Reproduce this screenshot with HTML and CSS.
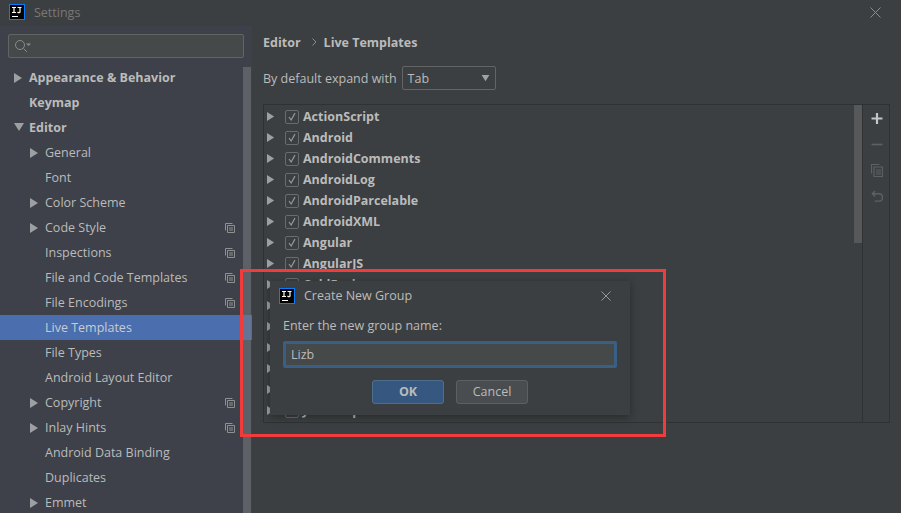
FILE: index.html
```html
<!DOCTYPE html>
<html>
	<head>
		<meta charset="utf-8" />
		<title>Settings</title>
		<link rel="stylesheet" href="styles.css">
	</head>
	<body>
		<svg class="defs" width="0" height="0">
			<symbol id="tri-r" viewBox="0 0 9 10"><path d="M0 0L8 5L0 10Z"/></symbol>
			<symbol id="tri-d" viewBox="0 0 10 9"><path d="M0 0H10L5 8Z"/></symbol>
			<symbol id="copy" viewBox="0 0 10 10"><path d="M.5 7.5V.5H7.5M2.500 2.500H9.500V9.500H2.500ZM4 5H8M4 7H8" fill="none" stroke="currentColor"/></symbol>
			<symbol id="check" viewBox="0 0 14 14"><path d="M3.500 7L6 10.500L10.500 2.500" fill="none" stroke="currentColor" stroke-width="1.300"/></symbol>
			<symbol id="logo" viewBox="0 0 16 16"><rect x=".5" y=".5" width="15" height="15" fill="#000" stroke="#087cfa"/><path d="M3 3.500H7M5 3.500V8.500M3 8.500H7M8.500 3.500H12.500M11 3.500V8C11 9 9.500 9 8.500 8M3 12.500H9" fill="none" stroke="#fff" stroke-width="1.200"/></symbol>
			<symbol id="close" viewBox="0 0 11 11"><path d="M.5 .5L10.500 10.500M10.500 .5L.5 10.500" fill="none" stroke="currentColor"/></symbol>
		</svg>

		<div class="window">
			<div class="titlebar">
				<svg class="logo"><use href="#logo"/></svg>
				<span class="title">Settings</span>
				<svg class="win-close"><use href="#close"/></svg>
			</div>
			<div class="content">
				<div class="sidebar">
					<div class="search">
						<svg class="search-icon" viewBox="0 0 17 14"><circle cx="6" cy="6" r="4.500" fill="none" stroke="currentColor"/><path d="M9.500 9.500L13 13" fill="none" stroke="currentColor"/><path d="M12 4.500H17L14.500 7Z" fill="currentColor"/></svg>
					</div>
					<div class="tree">
						<div class="node top"><svg class="tri"><use href="#tri-r"/></svg>Appearance &amp; Behavior</div>
						<div class="node top"><i class="gap"></i>Keymap</div>
						<div class="node top"><svg class="tri tri-open"><use href="#tri-d"/></svg>Editor</div>
						<div class="node sub"><svg class="tri"><use href="#tri-r"/></svg>General</div>
						<div class="node sub"><i class="gap"></i>Font</div>
						<div class="node sub"><svg class="tri"><use href="#tri-r"/></svg>Color Scheme</div>
						<div class="node sub"><svg class="tri"><use href="#tri-r"/></svg>Code Style<svg class="copy"><use href="#copy"/></svg></div>
						<div class="node sub"><i class="gap"></i>Inspections<svg class="copy"><use href="#copy"/></svg></div>
						<div class="node sub"><i class="gap"></i>File and Code Templates<svg class="copy"><use href="#copy"/></svg></div>
						<div class="node sub"><i class="gap"></i>File Encodings<svg class="copy"><use href="#copy"/></svg></div>
						<div class="node sub active"><i class="gap"></i>Live Templates</div>
						<div class="node sub"><i class="gap"></i>File Types</div>
						<div class="node sub"><i class="gap"></i>Android Layout Editor</div>
						<div class="node sub"><svg class="tri"><use href="#tri-r"/></svg>Copyright<svg class="copy"><use href="#copy"/></svg></div>
						<div class="node sub"><svg class="tri"><use href="#tri-r"/></svg>Inlay Hints<svg class="copy"><use href="#copy"/></svg></div>
						<div class="node sub"><i class="gap"></i>Android Data Binding</div>
						<div class="node sub"><i class="gap"></i>Duplicates</div>
						<div class="node sub"><svg class="tri"><use href="#tri-r"/></svg>Emmet</div>
						<div class="tree-thumb"></div>
					</div>
				</div>
				<div class="main">
					<div class="crumbs">
						<span>Editor</span>
						<svg class="crumb-sep" viewBox="0 0 5 8"><path d="M.5 .5L4 4L.5 7.500" fill="none" stroke="currentColor"/></svg>
						<span>Live Templates</span>
					</div>
					<div class="expand">
						<span>By default expand with</span>
						<div class="select">Tab<svg class="select-arrow"><use href="#tri-d"/></svg></div>
					</div>
					<div class="panel">
						<div class="groups">
							<div class="group"><svg class="tri"><use href="#tri-r"/></svg><span class="box"><svg><use href="#check"/></svg></span>ActionScript</div>
							<div class="group"><svg class="tri"><use href="#tri-r"/></svg><span class="box"><svg><use href="#check"/></svg></span>Android</div>
							<div class="group"><svg class="tri"><use href="#tri-r"/></svg><span class="box"><svg><use href="#check"/></svg></span>AndroidComments</div>
							<div class="group"><svg class="tri"><use href="#tri-r"/></svg><span class="box"><svg><use href="#check"/></svg></span>AndroidLog</div>
							<div class="group"><svg class="tri"><use href="#tri-r"/></svg><span class="box"><svg><use href="#check"/></svg></span>AndroidParcelable</div>
							<div class="group"><svg class="tri"><use href="#tri-r"/></svg><span class="box"><svg><use href="#check"/></svg></span>AndroidXML</div>
							<div class="group"><svg class="tri"><use href="#tri-r"/></svg><span class="box"><svg><use href="#check"/></svg></span>Angular</div>
							<div class="group"><svg class="tri"><use href="#tri-r"/></svg><span class="box"><svg><use href="#check"/></svg></span>AngularJS</div>
							<div class="group"><svg class="tri"><use href="#tri-r"/></svg><span class="box"><svg><use href="#check"/></svg></span>ColdFusion</div>
							<div class="group"><svg class="tri"><use href="#tri-r"/></svg><span class="box"></span></div>
							<div class="group"><svg class="tri"><use href="#tri-r"/></svg><span class="box"></span></div>
							<div class="group"><svg class="tri"><use href="#tri-r"/></svg><span class="box"></span></div>
							<div class="group"><svg class="tri"><use href="#tri-r"/></svg><span class="box"></span></div>
							<div class="group"><svg class="tri"><use href="#tri-r"/></svg><span class="box"></span></div>
							<div class="group"><svg class="tri"><use href="#tri-r"/></svg><span class="box"></span>JavaScript</div>
							<div class="groups-thumb"></div>
						</div>
						<div class="toolbar">
							<svg class="tool tool-on" viewBox="0 0 11 11"><path d="M5.500 .5V10.500M.5 5.500H10.500" fill="none" stroke="currentColor" stroke-width="2"/></svg>
							<svg class="tool" viewBox="0 0 11 11"><path d="M.5 5.500H10.500" fill="none" stroke="currentColor" stroke-width="1.500"/></svg>
							<svg class="tool" viewBox="0 0 12 13"><path d="M.5 9.500V.5H8.500M3 3H11.500V12.500H3ZM5 6H10M5 8H10M5 10H10" fill="none" stroke="currentColor" stroke-width="1.200"/></svg>
							<svg class="tool" viewBox="0 0 13 13"><path d="M4.500 .5L1.500 3.500L4.500 6.500M1.500 3.500H9C13.500 3.500 13.500 11.500 9 11.500H4" fill="none" stroke="currentColor" stroke-width="1.500"/></svg>
						</div>
					</div>
				</div>
			</div>

			<div class="dialog">
				<div class="dialog-head">
					<svg class="logo"><use href="#logo"/></svg>
					<span class="dialog-title">Create New Group</span>
					<svg class="dialog-close"><use href="#close"/></svg>
				</div>
				<div class="dialog-body">
					<div class="dialog-label">Enter the new group name:</div>
					<div class="name-input">Lizb</div>
					<div class="dialog-buttons">
						<div class="btn btn-ok">OK</div>
						<div class="btn">Cancel</div>
					</div>
				</div>
			</div>
			<div class="callout"></div>
		</div>
	</body>
</html>
```

FILE: styles.css
```css
html, body {
	margin: 0;
	height: 100%;
	overflow: hidden;
}
body {
	font-family: "Open Sans", "Noto Sans", sans-serif;
	font-size: 12.5px;
	color: #bbbbbb;
	background: #3c3f41;
}
.defs {
	position: absolute;
}
svg {
	display: block;
	fill: currentColor;
	flex: none;
}
.window {
	position: relative;
	width: 901px;
	height: 513px;
	overflow: hidden;
}

/* title bar */
.titlebar {
	height: 24px;
	margin-bottom: 2px;
	display: flex;
	align-items: center;
	padding-left: 9px;
	background: #3c3f41;
}
.logo {
	width: 16px;
	height: 16px;
}
.title {
	margin-left: 9px;
	color: #787878;
}
.win-close {
	width: 11px;
	height: 11px;
	margin-left: auto;
	margin-right: 20px;
	color: #8a8c8e;
}

.content {
	display: flex;
	height: 487px;
}

/* left tree */
.sidebar {
	width: 252px;
	flex: none;
	background: #3e4149;
}
.search {
	height: 22px;
	margin: 8px 8px 0;
	display: flex;
	align-items: center;
	padding-left: 5px;
	background: #45494a;
	border: 1px solid #646464;
	border-radius: 2px;
}
.search-icon {
	width: 17px;
	height: 14px;
	color: #8a8c8e;
}
.tree {
	position: relative;
	margin-top: 7px;
}
.node {
	height: 25px;
	display: flex;
	align-items: center;
	padding-left: 14px;
}
.top {
	font-weight: 700;
}
.sub {
	padding-left: 30px;
}
.tri {
	width: 9px;
	height: 10px;
	margin-right: 6px;
	color: #9da0a2;
}
.tri-open {
	width: 10px;
	height: 9px;
	margin-right: 5px;
}
.gap {
	width: 15px;
	flex: none;
}
.copy {
	width: 10px;
	height: 10px;
	margin-left: auto;
	margin-right: 17px;
	color: #8e9092;
}
.active {
	background: #4b6eaf;
	color: #c8ccd2;
}
.tree-thumb {
	position: absolute;
	left: 243px;
	top: 2px;
	width: 8px;
	bottom: -30px;
	background: rgba(120, 122, 128, 0.55);
}

/* right side */
.main {
	flex: 1;
	padding: 8px 11px 0;
	min-width: 0;
}
.crumbs {
	display: flex;
	align-items: center;
	height: 16px;
	font-weight: 700;
}
.crumb-sep {
	width: 5px;
	height: 8px;
	margin: 0 7px 0 11px;
	color: #8a8c8e;
}
.expand {
	display: flex;
	align-items: center;
	margin-top: 16px;
}
.select {
	width: 87px;
	height: 22px;
	margin-left: 5px;
	padding-left: 5px;
	display: flex;
	align-items: center;
	justify-content: space-between;
	background: #3c3f41;
	border: 1px solid #646464;
	border-radius: 2px;
}
.select-arrow {
	width: 11px;
	height: 7px;
	margin-right: 4px;
	color: #a0a2a4;
}
.panel {
	display: flex;
	height: 317px;
	margin-top: 14px;
	border: 1px solid #2f3133;
	overflow: hidden;
}
.groups {
	position: relative;
	flex: 1;
	padding-top: 1px;
}
.group {
	height: 21px;
	display: flex;
	align-items: center;
	padding-left: 3px;
	font-weight: 700;
}
.group .tri {
	width: 8px;
	height: 9px;
	margin-right: 10px;
}
.box {
	width: 12px;
	height: 12px;
	margin-right: 4px;
	border: 1px solid #6b6b6b;
	border-radius: 2px;
	color: #9a9c9e;
	flex: none;
}
.box svg {
	width: 12px;
	height: 12px;
}
.groups-thumb {
	position: absolute;
	right: 0;
	top: 0;
	width: 8px;
	height: 138px;
	background: #565859;
}
.toolbar {
	width: 27px;
	flex: none;
	display: flex;
	flex-direction: column;
	align-items: center;
	gap: 13px;
	padding-top: 7px;
	padding-left: 1px;
	box-sizing: border-box;
	border-left: 1px solid #2f3133;
}
.tool {
	width: 12px;
	height: 13px;
	color: #5e6163;
}
.tool-on {
	color: #c4c6c8;
}

/* modal */
.dialog {
	position: absolute;
	left: 270px;
	top: 281px;
	width: 360px;
	height: 134px;
	background: #3c3f41;
	box-shadow: 0 2px 8px rgba(0, 0, 0, 0.35);
}
.dialog-head {
	height: 29px;
	display: flex;
	align-items: center;
	padding-left: 9px;
}
.dialog-title {
	margin-left: 9px;
}
.dialog-close {
	width: 10px;
	height: 10px;
	margin-left: auto;
	margin-right: 19px;
	color: #a0a2a4;
}
.dialog-body {
	padding: 0 13px;
}
.dialog-label {
	height: 18px;
	line-height: 18px;
	margin-top: 7px;
}
.name-input {
	height: 21px;
	margin-top: 6px;
	padding-left: 5px;
	line-height: 21px;
	background: #45494a;
	border: 3px solid #3a5f85;
	border-radius: 2px;
}
.dialog-buttons {
	display: flex;
	justify-content: center;
	gap: 12px;
	margin-top: 12px;
}
.btn {
	width: 70px;
	height: 22px;
	line-height: 22px;
	text-align: center;
	background: #4a4d4f;
	border: 1px solid #5e6060;
	border-radius: 3px;
}
.btn-ok {
	background: #365880;
	border-color: #4c708c;
	font-weight: 700;
}

/* red marker painted on the screenshot */
.callout {
	position: absolute;
	left: 240px;
	top: 269px;
	width: 420px;
	height: 162px;
	border: 3px solid #f23b3b;
}
```
